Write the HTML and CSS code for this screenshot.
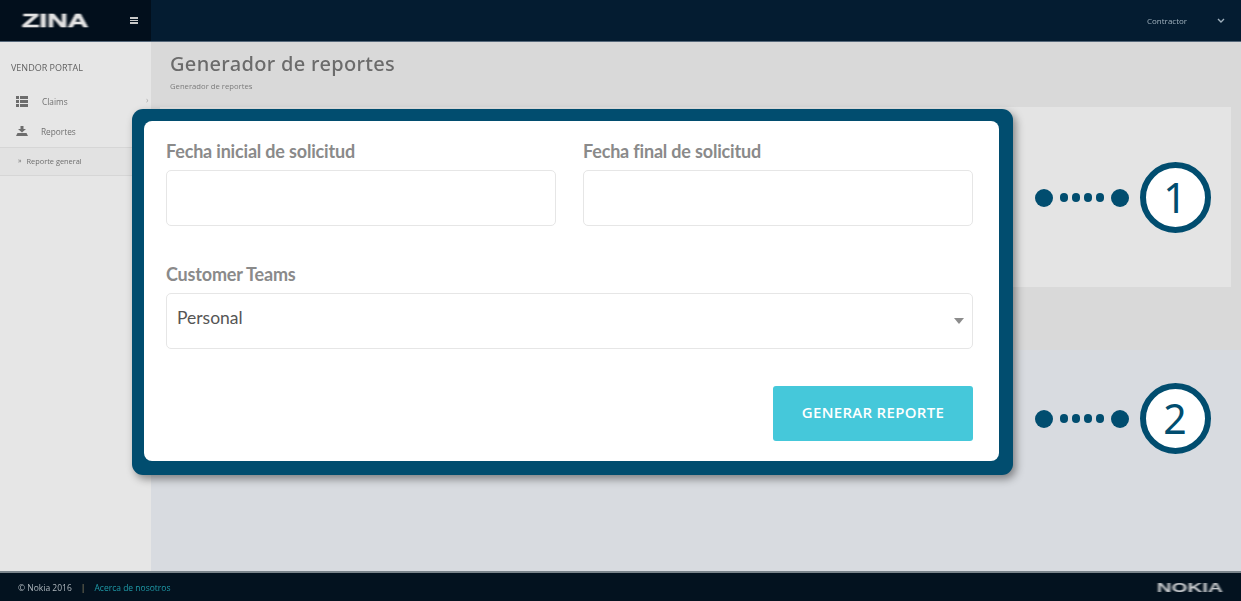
FILE: index.html
```html
<!DOCTYPE html>
<html lang="es">
<head>
<meta charset="utf-8">
<title>Generador de reportes</title>
<link rel="stylesheet" href="styles.css">
</head>
<body>
<div class="app">
  <header class="topbar">
    <div class="brand">
      <span class="logo">ZINA</span>
      <span class="burger"><i></i><i></i><i></i></span>
    </div>
    <div class="user">
      <span class="user-name">Contractor</span>
      <svg class="chev" width="8" height="5" viewBox="0 0 8 5"><path d="M1 1l3 3 3-3" fill="none" stroke="#9fb0bd" stroke-width="1.4"/></svg>
    </div>
  </header>
  <div class="middle">
    <aside class="sidebar">
      <div class="portal">VENDOR PORTAL</div>
      <div class="nav-item nav-claims">
        <svg class="nav-icon" width="12" height="11" viewBox="0 0 12 11"><path fill="#6d6d6d" d="M0 0h3v3H0zM4 0h8v3H4zM0 4h3v3H0zM4 4h8v3H4zM0 8h3v3H0zM4 8h8v3H4z"/></svg>
        <span>Claims</span>
        <em class="caret">›</em>
      </div>
      <div class="nav-item nav-rep">
        <svg class="nav-icon" width="12" height="10" viewBox="0 0 12 10"><path fill="#6d6d6d" d="M4.5 0h3v3H10L6 6.5 2 3h2.5zM1.5 7h9L12 10H0z"/></svg>
        <span>Reportes</span>
      </div>
      <div class="sub-item"><span class="sub-mark">»</span><span>Reporte general</span></div>
    </aside>
    <main class="content">
      <div class="page-head">
        <h1>Generador de reportes</h1>
        <div class="crumb">Generador de reportes</div>
      </div>
      <div class="card-one"></div>
      <div class="card-two"></div>
    </main>
  </div>
  <footer class="bottombar">
    <div class="foot-left"><span>© Nokia 2016</span><span class="sep">|</span><span class="foot-link">Acerca de nosotros</span></div>
    <div class="nokia">NOKIA</div>
  </footer>

  <section class="modal">
    <div class="modal-body">
      <div class="row">
        <div class="field">
          <label class="field-label">Fecha inicial de solicitud</label>
          <div class="input"></div>
        </div>
        <div class="field">
          <label class="field-label">Fecha final de solicitud</label>
          <div class="input"></div>
        </div>
      </div>
      <div class="field team">
        <label class="field-label">Customer Teams</label>
        <div class="input select"><span>Personal</span><i class="arrow"></i></div>
      </div>
      <div class="actions"><button class="btn" type="button">GENERAR REPORTE</button></div>
    </div>
  </section>

  <div class="callout callout-one">
    <i class="dot big"></i><i class="dot"></i><i class="dot"></i><i class="dot"></i><i class="dot"></i><i class="dot big"></i>
    <span class="num">1</span>
  </div>
  <div class="callout callout-two">
    <i class="dot big"></i><i class="dot"></i><i class="dot"></i><i class="dot"></i><i class="dot"></i><i class="dot big"></i>
    <span class="num">2</span>
  </div>
</div>
</body>
</html>
```
FILE: styles.css
```css
* { box-sizing: border-box; }
html, body { margin: 0; padding: 0; }
body { font-family: "Lato", "Open Sans", sans-serif; background: #d9d9d9; overflow: hidden; }
.app { position: relative; width: 1241px; height: 601px; display: flex; flex-direction: column; }

.topbar { height: 42px; flex: none; display: flex; justify-content: space-between; background: #041c31; border-bottom: 1px solid #56687a; }
.brand { width: 151px; display: flex; align-items: center; background: #020f1c; padding-left: 22px; }
.logo { font-family: "Liberation Sans", sans-serif; font-weight: 700; font-size: 18px; line-height: 1; color: #e4e4e4; width: 108px; -webkit-text-stroke: .5px #e4e4e4; transform: scaleX(1.58); transform-origin: left center; filter: blur(.6px); }
.burger { display: flex; flex-direction: column; gap: 1px; width: 8px; filter: blur(.4px); }
.burger i { display: block; height: 1.6px; background: #c8c8c8; }
.user { display: flex; align-items: center; padding-right: 16px; }
.user-name { font-family: "Open Sans", sans-serif; font-size: 8px; color: #9fb0bd; width: 70px; filter: blur(.55px); }

.middle { flex: 1; display: flex; min-height: 0; }
.sidebar { width: 151px; flex: none; background: #e6e6e6; }
.portal { font-family: "Open Sans", sans-serif; font-size: 9px; color: #626262; padding: 20px 0 0 11px; line-height: 12px; filter: blur(.55px); }
.nav-item { position: relative; display: flex; align-items: center; font-family: "Open Sans", sans-serif; font-size: 8.3px; color: #707070; height: 14px; padding-left: 16px; filter: blur(.55px); }
.nav-claims { margin-top: 20px; }
.nav-claims span { margin-left: 14px; }
.nav-rep { margin-top: 16px; }
.nav-rep span { margin-left: 13px; }
.caret { position: absolute; left: 146px; top: 0; font-style: normal; color: #aaa; }
.sub-item { margin-top: 9px; height: 29px; display: flex; align-items: center; gap: 5px; padding: 0 0 2px 18px; background: #e2e2e2; border-top: 1px solid #d6d6d6; border-bottom: 1px solid #d6d6d6; font-family: "Open Sans", sans-serif; font-size: 7.4px; color: #6e6e6e; }
.sub-item span { filter: blur(.55px); }
.sub-mark { font-size: 7px; }

.content { flex: 1; min-width: 0; display: flex; flex-direction: column; background: #d9d9d9; }
.page-head { height: 65px; padding: 9px 0 0 19px; flex: none; }
.page-head h1 { margin: 0; font-family: "Noto Sans", sans-serif; font-weight: 500; font-size: 20px; line-height: 26px; letter-spacing: .32px; color: #6b6b6b; filter: blur(.6px); }
.crumb { font-family: "Open Sans", sans-serif; font-size: 7.7px; line-height: 12px; margin-top: 3px; color: #7c7c7c; filter: blur(.55px); }
.card-one { height: 180px; margin: 0 10px 0 9px; background: #e4e4e4; flex: none; }
.card-two { flex: 1; margin-top: 63px; background: #d8dbe0; }

.bottombar { height: 30px; flex: none; display: flex; justify-content: space-between; align-items: center; background: #03121f; border-top: 2px solid #7b858c; padding: 0 18px; }
.foot-left { display: flex; align-items: center; font-family: "Open Sans", sans-serif; font-size: 8.5px; color: #aeb6bc; filter: blur(.6px); }
.sep { margin: 0 9px; color: #a89a70; }
.foot-link { color: #1f9aa8; }
.nokia { font-family: "Liberation Sans", sans-serif; font-weight: 700; font-size: 13px; color: #c6c9cc; transform: scaleX(1.58); transform-origin: right center; filter: blur(.55px); }

.modal { position: absolute; left: 132px; top: 109px; width: 881px; height: 366px; padding: 12px 14px 14px 12px; background: #014d6f; border-radius: 11px; box-shadow: 3px 4px 9px rgba(0,0,0,.42); }
.modal-body { height: 100%; padding: 19px 26px 0 22px; background: #fff; border-radius: 8px; }
.row { display: flex; gap: 27px; }
.row .field { width: 390px; }
.field-label { display: block; font-weight: 700; font-size: 18px; line-height: 22px; letter-spacing: -.18px; color: #8a8a8a; margin-bottom: 8px; }
.input { height: 56px; background: #fff; border: 1px solid #e6e6e6; border-radius: 5px; }
.team { margin-top: 37px; }
.select { display: flex; align-items: center; justify-content: space-between; padding: 0 8px 7px 10px; font-size: 17.5px; color: #555; }
.arrow { width: 0; height: 0; margin-top: 7px; border-left: 5px solid transparent; border-right: 5px solid transparent; border-top: 6px solid #8c8c8c; }
.actions { display: flex; justify-content: flex-end; margin-top: 37px; }
.btn { width: 200px; height: 55px; padding: 0 0 3px; border: 0; border-radius: 3px; background: #45c8da; color: #fff; font-family: "Open Sans", sans-serif; font-weight: 600; font-size: 15px; letter-spacing: .3px; }

.callout { position: absolute; left: 1035px; display: flex; align-items: center; gap: 3.5px; }
.callout-one { top: 162px; }
.callout-two { top: 383px; }
.dot { width: 8.5px; height: 8.5px; border-radius: 50%; background: #014d6f; }
.dot.big { width: 18px; height: 18px; }
.dot.big:first-child { margin-right: 3.25px; }
.dot.big:nth-child(6) { margin-left: 3.25px; }
.num { width: 71px; height: 71px; margin-left: 7px; display: flex; align-items: center; justify-content: center; border: 6px solid #014d6f; border-radius: 50%; background: #fff; color: #014d6f; font-family: "Noto Sans", sans-serif; font-weight: 400; font-size: 41px; line-height: 1; }
```
